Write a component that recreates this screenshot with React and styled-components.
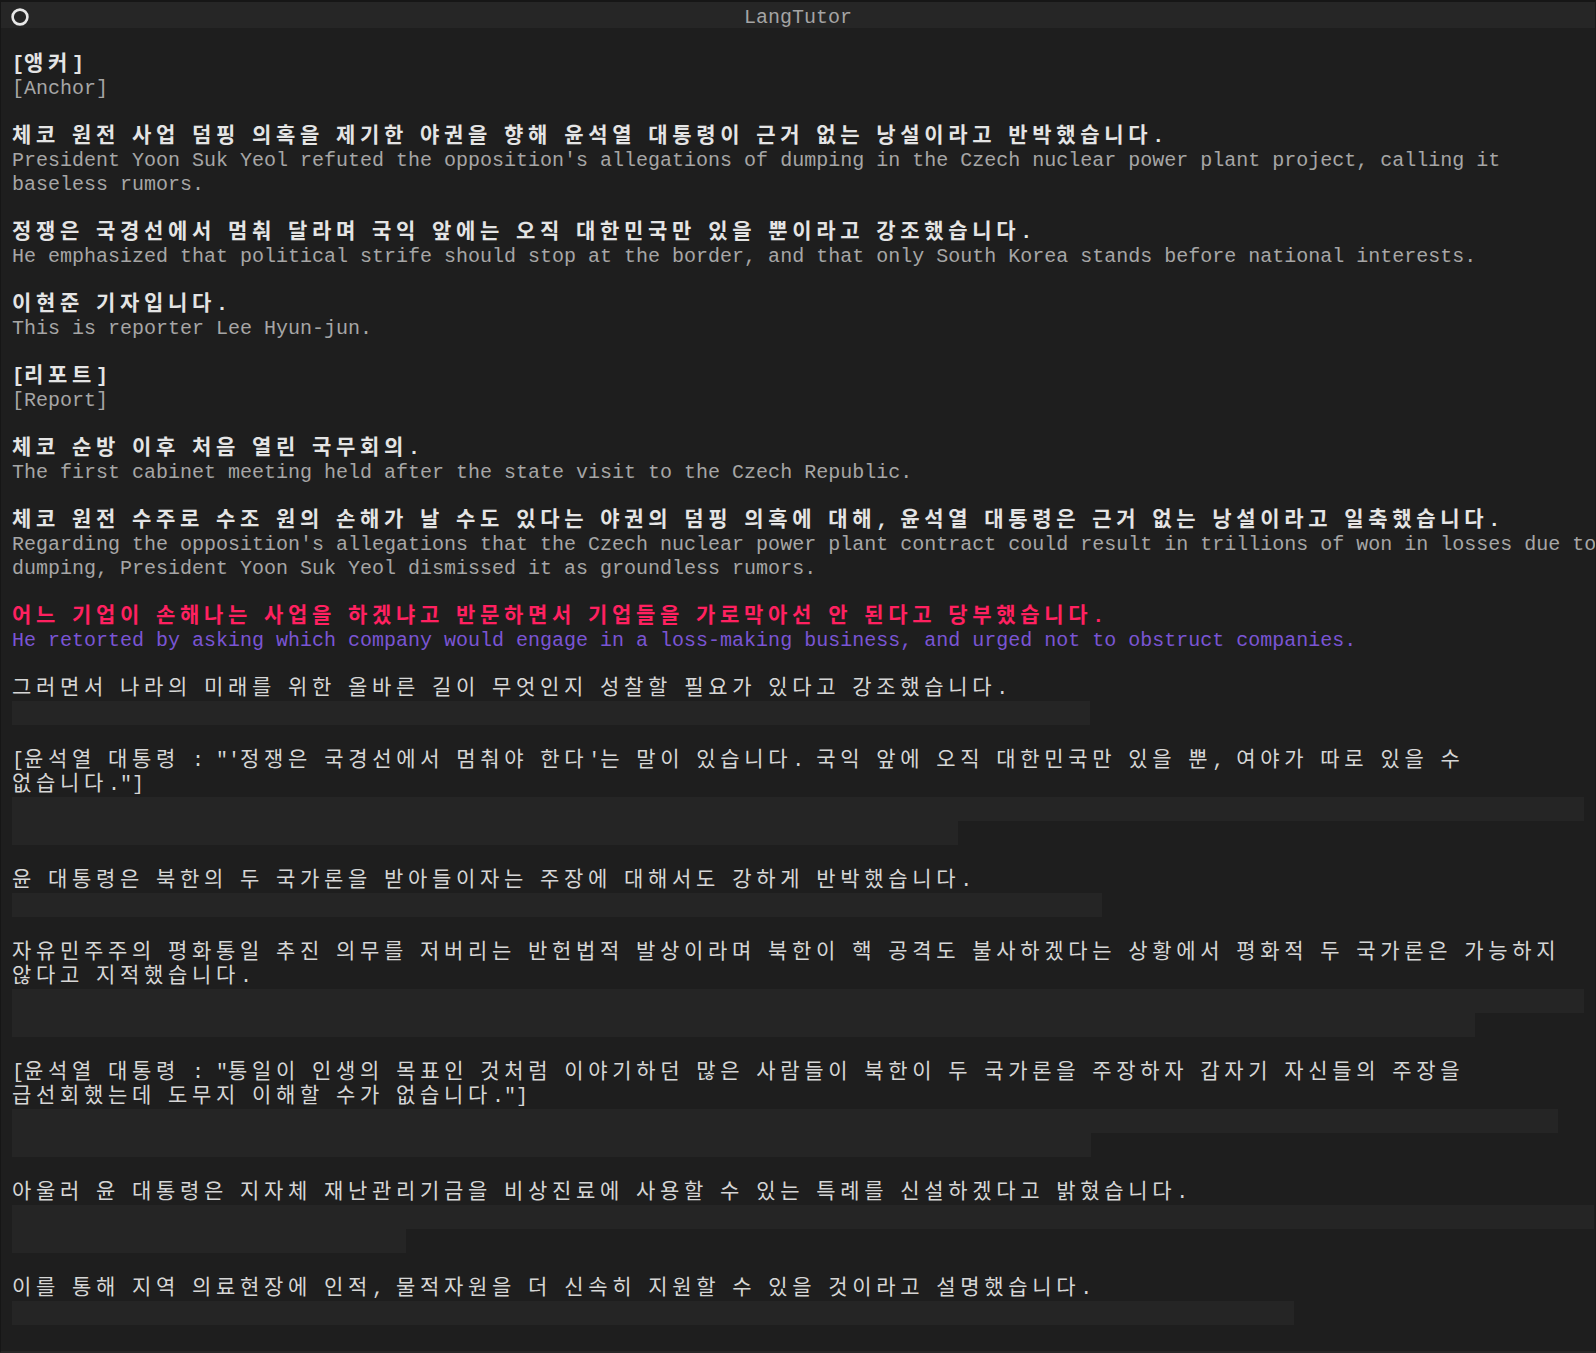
import React from "react";
import styled, { createGlobalStyle } from "styled-components";

const GlobalStyle = createGlobalStyle`
  html, body {
    margin: 0;
    padding: 0;
    background: #1e1e1e;
  }
  body {
    font-family: "Liberation Mono", "Noto Sans CJK KR", monospace;
  }
`;

// terminal-style cells: hangul takes two columns, everything else one
const HANGUL = /[\u1100-\u11ff\u3130-\u318f\uac00-\ud7af]/;

const lines = [
  { ko: "[앵커]", en: "[Anchor]" },
  {
    ko: "체코 원전 사업 덤핑 의혹을 제기한 야권을 향해 윤석열 대통령이 근거 없는 낭설이라고 반박했습니다.",
    en: "President Yoon Suk Yeol refuted the opposition's allegations of dumping in the Czech nuclear power plant project, calling it baseless rumors.",
  },
  {
    ko: "정쟁은 국경선에서 멈춰 달라며 국익 앞에는 오직 대한민국만 있을 뿐이라고 강조했습니다.",
    en: "He emphasized that political strife should stop at the border, and that only South Korea stands before national interests.",
  },
  { ko: "이현준 기자입니다.", en: "This is reporter Lee Hyun-jun." },
  { ko: "[리포트]", en: "[Report]" },
  {
    ko: "체코 순방 이후 처음 열린 국무회의.",
    en: "The first cabinet meeting held after the state visit to the Czech Republic.",
  },
  {
    ko: "체코 원전 수주로 수조 원의 손해가 날 수도 있다는 야권의 덤핑 의혹에 대해, 윤석열 대통령은 근거 없는 낭설이라고 일축했습니다.",
    en: "Regarding the opposition's allegations that the Czech nuclear power plant contract could result in trillions of won in losses due to dumping, President Yoon Suk Yeol dismissed it as groundless rumors.",
  },
  {
    ko: "어느 기업이 손해나는 사업을 하겠냐고 반문하면서 기업들을 가로막아선 안 된다고 당부했습니다.",
    en: "He retorted by asking which company would engage in a loss-making business, and urged not to obstruct companies.",
    active: true,
  },
  {
    ko: "그러면서 나라의 미래를 위한 올바른 길이 무엇인지 성찰할 필요가 있다고 강조했습니다.",
    pending: [1078],
  },
  {
    ko: "[윤석열 대통령 : \"'정쟁은 국경선에서 멈춰야 한다'는 말이 있습니다. 국익 앞에 오직 대한민국만 있을 뿐, 여야가 따로 있을 수 없습니다.\"]",
    pending: [1572, 946],
  },
  {
    ko: "윤 대통령은 북한의 두 국가론을 받아들이자는 주장에 대해서도 강하게 반박했습니다.",
    pending: [1090],
  },
  {
    ko: "자유민주주의 평화통일 추진 의무를 저버리는 반헌법적 발상이라며 북한이 핵 공격도 불사하겠다는 상황에서 평화적 두 국가론은 가능하지 않다고 지적했습니다.",
    pending: [1572, 1463],
  },
  {
    ko: "[윤석열 대통령 : \"통일이 인생의 목표인 것처럼 이야기하던 많은 사람들이 북한이 두 국가론을 주장하자 갑자기 자신들의 주장을 급선회했는데 도무지 이해할 수가 없습니다.\"]",
    pending: [1546, 1079],
  },
  {
    ko: "아울러 윤 대통령은 지자체 재난관리기금을 비상진료에 사용할 수 있는 특례를 신설하겠다고 밝혔습니다.",
    pending: [1582, 394],
  },
  {
    ko: "이를 통해 지역 의료현장에 인적, 물적자원을 더 신속히 지원할 수 있을 것이라고 설명했습니다.",
    pending: [1282],
  },
];

const Cells = ({ text }) =>
  text.split(" ").map((word, i) => (
    <React.Fragment key={i}>
      {i > 0 && " "}
      <Word>
        {[...word].map((ch, j) =>
          HANGUL.test(ch) ? <Wide key={j}>{ch}</Wide> : <Narrow key={j}>{ch}</Narrow>
        )}
      </Word>
    </React.Fragment>
  ));

const RecordIcon = () => (
  <svg width="20" height="20" viewBox="0 0 20 20">
    <circle cx="10" cy="10" r="7.4" fill="none" stroke="#e8e8e8" strokeWidth="2.6" />
  </svg>
);

const App = () => {
  return (
    <>
      <GlobalStyle />
      <Window>
        <TitleBar>
          <IconSlot>
            <RecordIcon />
          </IconSlot>
          <Title>LangTutor</Title>
          <span />
        </TitleBar>
        <Transcript>
          {lines.map((line, i) => (
            <Entry key={i}>
              <Source $tone={line.active ? "active" : line.pending ? "pending" : "done"}>
                <Cells text={line.ko} />
              </Source>
              {line.en && <Translation $active={line.active}>{line.en}</Translation>}
              {line.pending && (
                <Skeleton>
                  {line.pending.map((w, j) => (
                    <Bar key={j} $width={w} />
                  ))}
                </Skeleton>
              )}
            </Entry>
          ))}
        </Transcript>
      </Window>
    </>
  );
};

const Window = styled.div`
  width: 1596px;
  height: 1353px;
  display: flex;
  flex-direction: column;
  background: #1e1e1e;
  overflow: hidden;
  box-sizing: border-box;
  border-top: 2px solid #161616;
  border-left: 1px solid #161616;
  border-right: 1px solid #1a1a1a;
  border-bottom: 2px solid #272727;
`;

const TitleBar = styled.div`
  height: 26px;
  flex-shrink: 0;
  display: grid;
  grid-template-columns: 1fr auto 1fr;
  align-items: center;
  padding: 0 9px;
  background: #262626;
`;

const IconSlot = styled.div`
  display: flex;
  align-items: center;
  padding-top: 1px;
`;

const Title = styled.div`
  font-size: 20px;
  line-height: 26px;
  padding-top: 3px;
  color: #a4a4a4;
`;

const Transcript = styled.div`
  width: 1590px;
  padding: 25px 0 0 11px;
  font-size: 20px;
  line-height: 24px;
`;

const Entry = styled.div`
  margin-bottom: 24px;
`;

const toneColor = {
  done: "#e4e4e4",
  active: "#ff2160",
  pending: "#d6d6d6",
};

const Source = styled.div`
  color: ${(p) => toneColor[p.$tone]};
  font-weight: ${(p) => (p.$tone === "pending" ? 400 : 700)};
  word-break: keep-all;
`;

const Word = styled.span`
  white-space: nowrap;
`;

const Wide = styled.span`
  display: inline-block;
  width: 24px;
  font-size: 21px;
  line-height: 1;
  text-align: left;
`;

const Narrow = styled.span``;

const Translation = styled.div`
  color: ${(p) => (p.$active ? "#7a55d4" : "#a6a6a6")};
`;

const Skeleton = styled.div`
  display: flex;
  flex-direction: column;
`;

const Bar = styled.div`
  width: ${(p) => p.$width}px;
  height: 24px;
  background: #252525;
`;

export default App;
